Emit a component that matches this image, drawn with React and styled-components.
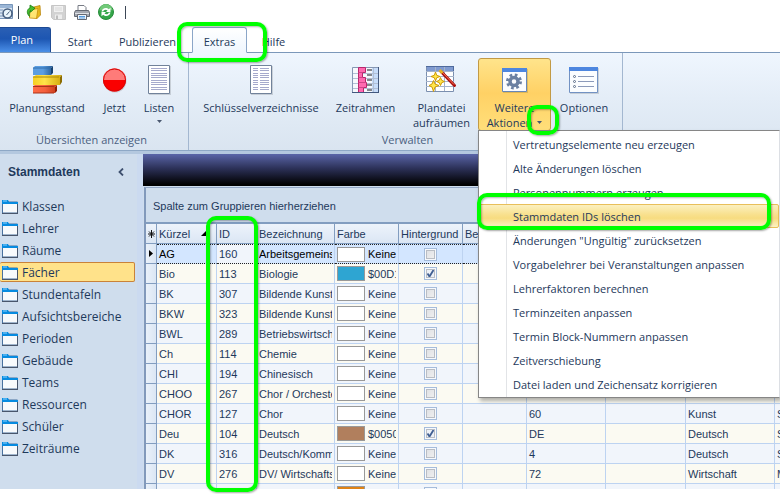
import React from "react";
import styled, { createGlobalStyle, css } from "styled-components";

const ui = '"Open Sans", "Noto Sans", sans-serif';
const gridFont = '"Liberation Sans", Arial, sans-serif';

const GlobalStyle = createGlobalStyle`
  *, *::before, *::after { box-sizing: border-box; }
  body { margin: 0; background: #fff; overflow: hidden; }
  button { font: inherit; color: inherit; border: 0; background: none; padding: 0; margin: 0; }
`;

const Window = styled.div`
  display: flex;
  flex-direction: column;
  height: 100vh;
  padding-bottom: 5px;
  overflow: hidden;
  font: 11px/16px ${ui};
  color: #1e395b;
`;

const QuickAccess = styled.div`
  display: flex;
  align-items: center;
  flex: none;
  height: 27px;
  padding-bottom: 3px;
`;

const QuickButton = styled.button`
  display: flex;
  justify-content: center;
  width: ${(p) => p.$width || 24}px;
  svg { display: block; }
`;

const QuickDivider = styled.span`
  width: 1px;
  height: 13px;
  background: #3c4756;
`;

const TabStrip = styled.div`
  display: flex;
  flex: none;
  height: 26px;
  border-bottom: 1px solid #7b98ba;
`;

const Tab = styled.button`
  position: relative;
  height: 26px;
  width: ${(p) => p.$width}px;
  padding-top: 4px;
  text-align: center;
  border: 1px solid transparent;
  ${(p) =>
    p.$file &&
    css`
      height: 25px;
      padding: 0 6px 0 0;
      color: #fff;
      background: linear-gradient(#2a5fb4, #1d56b2 45%, #4a8fe8);
      border-color: #1d4a94;
      border-left: 0;
      border-bottom: 0;
      border-radius: 0 3px 0 0;
    `}
  ${(p) =>
    p.$active &&
    css`
      background: linear-gradient(#fff, #eff6fe);
      border-color: #8ba6c8;
      border-bottom-color: #eff6fe;
      border-radius: 3px 3px 0 0;
    `}
`;

const Marker = styled.span`
  position: absolute;
  z-index: 5;
  top: ${(p) => p.$top}px;
  right: ${(p) => p.$right}px;
  bottom: ${(p) => p.$bottom}px;
  left: ${(p) => p.$left}px;
  border: 4px solid #00ff00;
  border-radius: 10px;
  box-shadow: 1px 1px 2px rgba(0, 0, 0, 0.35), inset 1px 1px 2px rgba(0, 0, 0, 0.3);
  pointer-events: none;
`;

const ColumnMarker = styled(Marker)`
  right: auto;
  width: 52px;
`;

const Ribbon = styled.div`
  display: flex;
  flex: none;
  height: 101px;
  background: linear-gradient(#eff6fe, #e4edf7 45%, #d9e4f0);
  border-bottom: 1px solid #b4c8df;
  box-shadow: inset 0 -2px 0 #b4c8df, inset 0 -3px 0 #8ea8c6;
`;

const Group = styled.section`
  display: flex;
  flex-direction: column;
  height: 97px;
  padding: 5px ${(p) => p.$end}px 0 ${(p) => p.$start}px;
  border-right: 1px solid #a3b7d0;
`;

const GroupButtons = styled.div`
  display: flex;
  height: 73px;
`;

const GroupLabel = styled.div`
  padding-top: 1px;
  text-align: center;
  color: #4b5f80;
`;

const RibbonButton = styled.button`
  display: flex;
  flex-direction: column;
  align-items: center;
  height: 73px;
  width: ${(p) => p.$width}px;
  padding-top: 5px;
  line-height: 15px;
  white-space: nowrap;
  border: 1px solid transparent;
  border-radius: 3px;
  svg { flex: none; display: block; }
  ${(p) =>
    p.$open &&
    css`
      background: linear-gradient(#ffe48b, #ffd165 48%, #ffdf7a);
      border-color: #c29a45;
    `}
`;

const IconBox = styled.span`
  display: flex;
  align-items: center;
  height: 32px;
  margin-bottom: 4px;
`;

const Caption = styled.span`
  display: flex;
  align-items: center;
  gap: 5px;
`;

const ArrowRow = styled.span`
  display: flex;
  align-items: center;
  height: 12px;
`;

const MenuAnchor = styled.div`
  position: relative;
  margin-left: 2px;
`;

const Menu = styled.div`
  position: absolute;
  z-index: 4;
  top: 72px;
  left: 0;
  width: 302px;
  padding: 1px 0;
  background: linear-gradient(90deg, #fff 27px, #e2e4e7 27px, #e2e4e7 28px, #fff 28px);
  border: 1px solid #868686;
  border-right-color: #dcdfe4;
  box-shadow: 2px 3px 4px rgba(0, 0, 0, 0.3);
`;

const MenuItem = styled.button`
  display: block;
  width: 100%;
  height: 24px;
  padding: 1px 0 0 33px;
  text-align: left;
  border: 1px solid transparent;
  border-radius: 2px;
  ${(p) =>
    p.$active &&
    css`
      background: linear-gradient(#fbf0c0, #f8e08c 45%, #f7dc80 60%, #fdf3c4);
      border-color: #e8bf5a;
    `}
`;

const Workspace = styled.div`
  display: flex;
  flex: 1;
  min-height: 0;
  background: #cfdded;
`;

const Sidebar = styled.nav`
  flex: none;
  width: 137px;
  font-size: 12px;
`;

const SidebarHeader = styled.div`
  display: flex;
  align-items: center;
  justify-content: space-between;
  height: 41px;
  padding: 0 13px 6px 8px;
`;

const SidebarTitle = styled.h2`
  margin: 0;
  font: bold 12px/16px ${gridFont};
`;

const SidebarItem = styled.button`
  display: flex;
  align-items: center;
  gap: 4px;
  width: 135px;
  height: 22px;
  padding: 1px 0 0 2px;
  text-align: left;
  border: 1px solid transparent;
  border-left: 0;
  border-radius: 2px;
  ${(p) =>
    p.$active &&
    css`
      height: 20px;
      margin: 1px 0;
      background: #ffe28a;
      border-color: #c98239;
    `}
`;

const Splitter = styled.div`
  flex: none;
  width: 6px;
  background: #cbdaf0;
`;

const Main = styled.main`
  position: relative;
  display: flex;
  flex-direction: column;
  flex: 1;
  min-width: 0;
`;

const Banner = styled.div`
  flex: none;
  height: 32px;
  background: linear-gradient(#5a65a8, #2c3158 45%, #000 95%);
`;

const GridPanel = styled.div`
  flex: 1;
  min-height: 0;
  margin: 1px 0 0 1px;
  overflow: hidden;
  border-top: 1px solid #93a7c5;
  border-left: 2px solid #8299bb;
  font: 11px/14px ${gridFont};
`;

const GroupPanel = styled.div`
  height: 36px;
  padding: 11px 7px 0;
  border-bottom: 2px solid #829dc0;
`;

const Table = styled.table`
  width: 100%;
  min-width: 720px;
  table-layout: fixed;
  border-collapse: separate;
  border-spacing: 0;
`;

const Col = styled.col`
  width: ${(p) => p.$width}px;
`;

const HeaderCell = styled.th`
  height: 20px;
  padding: 0 2px;
  overflow: hidden;
  font-weight: normal;
  text-align: left;
  white-space: nowrap;
  background: linear-gradient(#edf3fb, #dbe6f4);
  border-right: 1px solid #829dc0;
  border-bottom: 1px solid #829dc0;
`;

const SortButton = styled.button`
  display: flex;
  align-items: center;
  justify-content: space-between;
  width: 100%;
  padding-right: 8px;
`;

const Row = styled.tr`
  background: ${(p) => (p.$selected ? "#d3e6ff" : p.$alt ? "#fbfaf2" : "#f1f5fb")};
  color: ${(p) => (p.$selected ? "#000" : "#1e395b")};
`;

const Cell = styled.td`
  height: 20px;
  padding: 0 2px;
  text-align: ${(p) => (p.$center ? "center" : "left")};
  white-space: nowrap;
  border-right: 1px solid #bdd3f1;
  border-bottom: 1px solid #bdd3f1;
  ${(p) =>
    p.$dotted &&
    css`
      border-top: 1px dotted #222;
      border-bottom: 1px dotted #222;
    `}
  ${(p) =>
    p.$plain &&
    css`
      background: #f1f5fb;
      color: #1e395b;
    `}
`;

const Indicator = styled.td`
  height: 20px;
  padding: 0 0 0 3px;
  background: linear-gradient(90deg, #eaf1fa, #dbe6f4);
  border-right: 1px solid #829dc0;
  border-bottom: 1px solid #829dc0;
  svg { display: block; }
`;

const Clip = styled.div`
  overflow: hidden;
`;

const ColorValue = styled.div`
  display: flex;
  align-items: center;
  gap: 3px;
  overflow: hidden;
`;

const Swatch = styled.span`
  flex: none;
  width: 28px;
  height: 15px;
  background: ${(p) => p.$color};
  border: 1px solid #999;
`;

const Check = styled.input`
  appearance: none;
  display: block;
  width: 13px;
  height: 13px;
  margin: 0 auto;
  background: linear-gradient(135deg, #dcdee2, #f2f2f2);
  border: 1px solid #a5bcdb;
  box-shadow: inset 0 0 0 1px #f7f9fc, inset 0 0 0 2px #b9bdc4;
  &:checked {
    background: url("data:image/svg+xml,%3Csvg xmlns='http://www.w3.org/2000/svg' viewBox='0 0 11 11'%3E%3Cpath d='M2.5 5.5l2 3 4-6.500' fill='none' stroke='%23405f92' stroke-width='1.8'/%3E%3C/svg%3E") #edf1f7;
  }
`;

const DownArrow = () => (
  <svg width="5" height="3" aria-hidden="true"><path d="M0 0h5L2.500 3z" fill="#4a5870" /></svg>
);

const PreviewIcon = () => (
  <svg width="14" height="16" viewBox="0 0 14 16">
    <path d="M0 .5h12.500v14H0" fill="#dbe6f3" stroke="#7795b9" />
    <path d="M0 1h12v3H0z" fill="#9bb6d6" />
    <path d="M0 6h3M0 9h2M0 12h3" stroke="#7795b9" />
    <circle cx="7.500" cy="9.500" r="4.500" fill="#e9f4fb" stroke="#465e7e" strokeWidth="1.600" />
    <path d="M6.500 11l3-3.500" stroke="#465e7e" />
  </svg>
);

const OpenIcon = () => (
  <svg width="16" height="16" viewBox="0 0 16 16">
    <path d="M6 3.500L14 1.500l.5 9.500-4 4z" fill="#e9b91c" stroke="#b98408" strokeWidth=".8" />
    <path d="M4 6.500l2-1 6-1-1.500 10L3.500 14z" fill="#ffe574" stroke="#c78d0b" strokeWidth=".8" />
    <path d="M3.500 12.500C.5 9.500.5 5.500 4 3.800V1l5 3.200-4.500 4V6.500C3 7.500 3 10 3.500 12.500z" fill="#46bb2f" stroke="#16810f" strokeWidth=".8" />
  </svg>
);

const SaveIcon = () => (
  <svg width="15" height="15" viewBox="0 0 15 15">
    <path d="M.5.5h14v14h-12l-2-2z" fill="#d2d2d2" stroke="#c6c6c6" />
    <path d="M3 1h9v6H3z" fill="#f1f1f1" />
    <path d="M4 3h7M4 5h7" stroke="#d8d8d8" />
    <path d="M4 9.500h7V14H4z" fill="#ededed" />
    <path d="M5 10.500h2V14H5z" fill="#bdbdbd" />
  </svg>
);

const PrintIcon = () => (
  <svg width="16" height="15" viewBox="0 0 16 15">
    <path d="M4 6V.5h6l2 2V6" fill="#fff" stroke="#777b84" />
    <path d="M1.500 5.500h13l1 2v4H.5v-4z" fill="#a4a8b1" stroke="#646973" />
    <path d="M1 8.500h14" stroke="#dfe2e7" />
    <path d="M3.500 9.500h9v5h-9z" fill="#eef4fc" stroke="#646973" />
    <path d="M5 11.500h6M5 13h6" stroke="#559bdf" />
  </svg>
);

const RefreshIcon = () => (
  <svg width="16" height="16" viewBox="0 0 16 16">
    <circle cx="8" cy="8" r="7.500" fill="#35a64a" stroke="#278c3a" />
    <path d="M1.500 6.500a6.500 6.500 0 0 1 13 0q-6-2-13 0z" fill="#72c979" />
    <path d="M3.500 7.500C4 4 8.500 2.800 10.800 5.200L12.500 3.800V8H8l1.500-1.500C8 5 5.500 5.700 5.300 7.500zM12.500 8.500C12 12 7.500 13.200 5.200 10.800L3.500 12.200V8H8L6.500 9.500C8 11 10.500 10.300 10.700 8.500z" fill="#fff" />
  </svg>
);

const BarsIcon = () => (
  <svg width="30" height="28" viewBox="0 0 30 28">
    <defs>
      <linearGradient id="blueBar"><stop stopColor="#5c9de0" /><stop offset=".5" stopColor="#5c9de0" /><stop offset="1" stopColor="#245a95" /></linearGradient>
      <linearGradient id="goldBar"><stop stopColor="#f5cf20" /><stop offset=".4" stopColor="#ffe24a" /><stop offset="1" stopColor="#d1a80c" /></linearGradient>
      <linearGradient id="redBar"><stop stopColor="#ff6b45" /><stop offset=".5" stopColor="#f4603e" /><stop offset="1" stopColor="#c83a18" /></linearGradient>
    </defs>
    <path d="M1 2l2-2h18l-2 2v7H1z" fill="url(#blueBar)" />
    <path d="M19 2l2-2v7l-2 2z" fill="#164270" />
    <path d="M1 2h18" stroke="#316fae" />
    <path d="M1 11l3-2h26l-2 2v8H1z" fill="url(#goldBar)" />
    <path d="M28 11l2-2v7l-2 3z" fill="#8c6c00" />
    <path d="M1 11h26" stroke="#ad8905" />
    <path d="M1 20l2-1h22l-2 2v6H1z" fill="url(#redBar)" />
    <path d="M23 21l2-2v6l-2 2z" fill="#8f1e06" />
    <path d="M1 20.500h21M1 27h21" stroke="#a9331a" />
  </svg>
);

const NowIcon = () => (
  <svg width="25" height="25" viewBox="0 0 25 25">
    <circle cx="13" cy="13" r="11.500" fill="#00000022" />
    <circle cx="12.500" cy="12" r="11.500" fill="#fa0000" />
    <path d="M1 12a11.500 11.500 0 0 1 23 0z" fill="#ff7b79" />
    <circle cx="12.500" cy="12" r="11" fill="none" stroke="#d60808" />
  </svg>
);

const ListIcon = ({ split }) => (
  <svg width="23" height="30" viewBox="0 0 23 30">
    <path d="M1 1h22v29H1z" fill="#00000022" />
    <path d="M.5.5h21v28H.5z" fill="#fff" stroke="#71829a" />
    <path d="M3 3.500h16M3 5.500h16M3 8.500h16M3 10.500h16M3 12.500h16M3 15.500h16M3 17.500h16M3 19.500h16M3 22.500h16M3 24.500h16" stroke="#a5a9cc" />
    {split && <path d="M9 2v25" stroke="#fff" strokeWidth="2" />}
  </svg>
);

const FrameIcon = () => (
  <svg width="28" height="27" viewBox="0 0 28 27">
    <path d="M.5.5h26v25H.5z" fill="#f6f8fc" stroke="#8697b3" />
    <path d="M20 1h6v24h-6z" fill="#c6dcfa" />
    <path d="M1 6.500h25M1 11.500h25M1 16.500h25M1 21.500h25M21.500 1v24" stroke="#b2bfd4" />
    <path d="M6.500.5h7v5h-3v5h3v5h1v5h-3v5h-5z" fill="#ff69b0" stroke="#b9266d" />
    <path d="M6.500 5.500h4M6.500 10.500h4M6.500 15.500h7M6.500 20.500h5" stroke="#d04488" />
    <path d="M15 3h5M15 8h5M15 13h5M15 18h5M15 23h5" stroke="#85878c" strokeWidth="2" />
    <path d="M0 25.500h27M26.500 0v26" stroke="#42587e" />
  </svg>
);

const WandIcon = () => (
  <svg width="31" height="28" viewBox="0 0 31 28">
    <path d="M.5.5h27v25H.5z" fill="#fff" stroke="#7b8faf" />
    <path d="M1 1h26v4H1z" fill="#7f9ad0" />
    <path d="M9.500 0v25M18.500 0v25M0 5.500h28M0 10.500h28M0 15.500h28M0 20.500h28" stroke="#a6b4ca" />
    <path d="M0 .5h28M27.500 0v5" stroke="#4f6a9c" />
    <path d="M9.500 6l1.200 3.300 3.300 1.200-3.300 1.200-1.200 3.300-1.200-3.300L5 10.500l3.300-1.200zM14.500 11.500l1.200 2.800 2.800 1.200-2.800 1.200-1.200 2.800-1.200-2.800-2.800-1.200 2.800-1.200zM7.500 14.500l1.500 3.500 4 1.500L9 21l-1.500 4.500L6 21l-3-1.500L6 18z" fill="#ffe64b" stroke="#d19b05" />
    <path d="M15 5.500L28.500 19.500" stroke="#a80e0b" strokeWidth="3" strokeLinecap="round" />
    <path d="M15 5L28 18.500" stroke="#ff7859" />
    <path d="M13.500 4l3 3" stroke="#e5b527" strokeWidth="3" />
  </svg>
);

const GearIcon = () => (
  <svg width="26" height="25" viewBox="0 0 26 25">
    <path d="M1 1h25v24H1z" fill="#00000022" />
    <path d="M.5.5h24v23H.5z" fill="#fbfcff" stroke="#6787b8" />
    <path d="M0 0h25v4H0z" fill="#4d86df" />
    <g fill="none" stroke="#6b80a2">
      <circle cx="12" cy="13.500" r="4" strokeWidth="3.500" />
      <circle cx="12" cy="13.500" r="6.500" strokeWidth="3" strokeDasharray="2.600 2.505" />
    </g>
  </svg>
);

const OptionsIcon = () => (
  <svg width="30" height="27" viewBox="0 0 30 27">
    <path d="M1 1h29v26H1z" fill="#00000022" />
    <path d="M.5.5h28v25H.5z" fill="#fbfdff" stroke="#7292c3" />
    <path d="M0 0h29v4H0z" fill="#4d86df" />
    <path d="M9 9.500h16M9 14.500h16M9 19.500h16" stroke="#8b9aba" />
    <g fill="#fff" stroke="#586b88"><circle cx="5.500" cy="9.500" r="1" /><circle cx="5.500" cy="14.500" r="1" /><circle cx="5.500" cy="19.500" r="1" /></g>
  </svg>
);

const FolderIcon = () => (
  <svg width="16" height="14" viewBox="0 0 16 14" aria-hidden="true">
    <path d="M.5 13V.5h5l1 1.500h9V13z" fill="#f8fafc" stroke="#49719e" />
    <path d="M0 0h6l1 2h9v2H0z" fill="#078be0" />
    <path d="M1 1h4" stroke="#8fd4ff" />
    <path d="M0 13.500h16M15.500 4v10" stroke="#49566c" />
  </svg>
);

const menuItems = [
  "Vertretungselemente neu erzeugen",
  "Alte Änderungen löschen",
  "Personennummern erzeugen",
  "Stammdaten IDs löschen",
  'Änderungen "Ungültig" zurücksetzen',
  "Vorgabelehrer bei Veranstaltungen anpassen",
  "Lehrerfaktoren berechnen",
  "Terminzeiten anpassen",
  "Termin Block-Nummern anpassen",
  "Zeitverschiebung",
  "Datei laden und Zeichensatz korrigieren",
];

const sections = ["Klassen", "Lehrer", "Räume", "Fächer", "Stundentafeln", "Aufsichtsbereiche", "Perioden", "Gebäude", "Teams", "Ressourcen", "Schüler", "Zeiträume"];

const columnWidths = [11, 60, 40, 78, 64, 64, 64, 79, 80, 89];

const subjects = [
  { code: "AG", id: 160, name: "Arbeitsgemeins" },
  { code: "Bio", id: 113, name: "Biologie", color: "#2ea5d2", value: "$00D1" },
  { code: "BK", id: 307, name: "Bildende Kunst" },
  { code: "BKW", id: 323, name: "Bildende Kunst/" },
  { code: "BWL", id: 289, name: "Betriebswirtsch" },
  { code: "Ch", id: 114, name: "Chemie" },
  { code: "CHI", id: 194, name: "Chinesisch" },
  { code: "CHOO", id: 267, name: "Chor / Orcheste" },
  { code: "CHOR", id: 127, name: "Chor", number: "60", area: "Kunst", last: "S" },
  { code: "Deu", id: 104, name: "Deutsch", color: "#b17f5d", value: "$0050", number: "DE", area: "Deutsch", last: "S" },
  { code: "DK", id: 316, name: "Deutsch/Komm", number: "4", area: "Deutsch", last: "S" },
  { code: "DV", id: 276, name: "DV/ Wirtschafts", number: "72", area: "Wirtschaft", last: "M" },
  { code: "", id: "", name: "", color: "#e08214", value: "" },
];

function Action({ icon, label, second, width, arrow, open }) {
  return (
    <RibbonButton $width={width} $open={open} aria-expanded={open}>
      <IconBox>{icon}</IconBox>
      <Caption>{label}</Caption>
      {second && <Caption>{second}{open && <DownArrow />}</Caption>}
      {arrow && <ArrowRow><DownArrow /></ArrowRow>}
    </RibbonButton>
  );
}

function SubjectRow({ subject, index }) {
  const selected = index === 0;
  return (
    <Row $selected={selected} $alt={index % 2 === 1}>
      <Indicator>{selected && <svg width="5" height="7"><path d="M0 0l4 3.500L0 7z" fill="#000" /></svg>}</Indicator>
      <Cell $dotted={selected}>{subject.code}</Cell>
      <Cell $dotted={selected} $plain={selected}>{subject.id}</Cell>
      <Cell $dotted={selected}><Clip>{subject.name}</Clip></Cell>
      <Cell $dotted={selected}>
        <ColorValue><Swatch $color={subject.color || "#fff"} />{subject.value ?? "Keine"}</ColorValue>
      </Cell>
      <Cell $dotted={selected} $center>
        <Check type="checkbox" aria-label={`Hintergrund ${subject.code}`} defaultChecked={Boolean(subject.value)} />
      </Cell>
      <Cell $dotted={selected} />
      <Cell $dotted={selected}>{subject.number}</Cell>
      <Cell $dotted={selected} />
      <Cell $dotted={selected}>{subject.area}</Cell>
      <Cell $dotted={selected}>{subject.last}</Cell>
    </Row>
  );
}

export default function App() {
  return (
    <Window>
      <GlobalStyle />
      <QuickAccess>
        <QuickButton $width={14} aria-label="Vorschau"><PreviewIcon /></QuickButton>
        <QuickButton as="span" $width={8}><QuickDivider /></QuickButton>
        <QuickButton aria-label="Öffnen"><OpenIcon /></QuickButton>
        <QuickButton aria-label="Speichern"><SaveIcon /></QuickButton>
        <QuickButton aria-label="Drucken"><PrintIcon /></QuickButton>
        <QuickButton aria-label="Aktualisieren"><RefreshIcon /></QuickButton>
        <QuickButton as="span" $width={14}><QuickDivider /></QuickButton>
      </QuickAccess>
      <TabStrip>
        <Tab $file $width={51}>Plan</Tab>
        <Tab $width={58}>Start</Tab>
        <Tab $width={77}>Publizieren</Tab>
        <Tab as="span" $width={6} />
        <Tab $active $width={55}>Extras<Marker $top={-6} $right={-21} $bottom={-10} $left={-16} /></Tab>
        <Tab $width={53}>Hilfe</Tab>
      </TabStrip>
      <Ribbon>
        <Group $start={4} $end={9}>
          <GroupButtons>
            <Action icon={<BarsIcon />} label="Planungsstand" width={86} />
            <Action icon={<NowIcon />} label="Jetzt" width={49} />
            <Action icon={<ListIcon />} label="Listen" width={40} arrow />
          </GroupButtons>
          <GroupLabel>Übersichten anzeigen</GroupLabel>
        </Group>
        <Group $start={9} $end={5}>
          <GroupButtons>
            <Action icon={<ListIcon split />} label="Schlüsselverzeichnisse" width={126} />
            <Action icon={<FrameIcon />} label="Zeitrahmen" width={83} />
            <Action icon={<WandIcon />} label="Plandatei" second="aufräumen" width={69} />
            <MenuAnchor>
              <Action icon={<GearIcon />} label="Weitere" second="Aktionen" width={73} open />
              <Marker $top={47} $right={-8} $bottom={-4} $left={49} />
              <Menu role="menu">
                {menuItems.map((item, i) => (
                  <MenuItem key={item} role="menuitem" $active={i === 3}>{item}</MenuItem>
                ))}
                <Marker $top={62} $right={8} $bottom={167} $left={-2} />
              </Menu>
            </MenuAnchor>
            <Action icon={<OptionsIcon />} label="Optionen" width={66} />
          </GroupButtons>
          <GroupLabel>Verwalten</GroupLabel>
        </Group>
      </Ribbon>
      <Workspace>
        <Sidebar aria-label="Stammdaten">
          <SidebarHeader>
            <SidebarTitle>Stammdaten</SidebarTitle>
            <button aria-label="Einklappen">
              <svg width="6" height="8" viewBox="0 0 6 8"><path d="M5 .5L1.500 4 5 7.500" fill="none" stroke="#3e4f6e" strokeWidth="1.800" /></svg>
            </button>
          </SidebarHeader>
          {sections.map((name) => (
            <SidebarItem key={name} $active={name === "Fächer"}><FolderIcon />{name}</SidebarItem>
          ))}
        </Sidebar>
        <Splitter />
        <Main>
          <Banner />
          <GridPanel>
            <GroupPanel>Spalte zum Gruppieren hierherziehen</GroupPanel>
            <Table>
              <colgroup>
                {columnWidths.map((w, i) => <Col key={i} $width={w} />)}
                <col />
              </colgroup>
              <thead>
                <tr>
                  <HeaderCell aria-label="Zeile">
                    <svg width="7" height="8" viewBox="0 0 7 8"><path d="M3.500 0v8M0 4h7M1 1.500l5 5M6 1.500l-5 5" stroke="#111" /></svg>
                  </HeaderCell>
                  <HeaderCell>
                    <SortButton>Kürzel<svg width="5" height="5"><path d="M5 0v5H0z" fill="#000" /></svg></SortButton>
                  </HeaderCell>
                  <HeaderCell>ID</HeaderCell>
                  <HeaderCell>Bezeichnung</HeaderCell>
                  <HeaderCell>Farbe</HeaderCell>
                  <HeaderCell>Hintergrund</HeaderCell>
                  <HeaderCell>Be</HeaderCell>
                  <HeaderCell />
                  <HeaderCell />
                  <HeaderCell />
                  <HeaderCell />
                </tr>
              </thead>
              <tbody>
                {subjects.map((s, i) => <SubjectRow key={i} subject={s} index={i} />)}
              </tbody>
            </Table>
          </GridPanel>
          <ColumnMarker $top={62} $bottom={-3} $left={63} />
        </Main>
      </Workspace>
    </Window>
  );
}
